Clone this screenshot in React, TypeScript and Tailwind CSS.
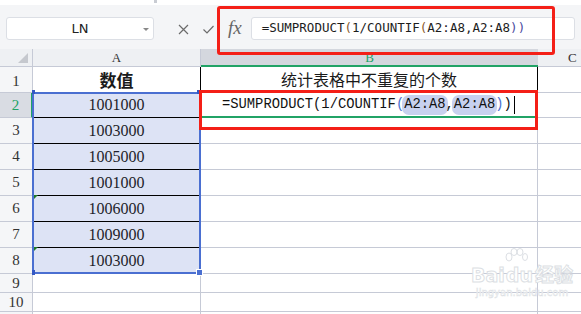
import React from 'react';

const VALUES = ['1001000', '1003000', '1005000', '1001000', '1006000', '1009000', '1003000'];

const GRID = 'border-[#c6cad6]';

// rows 9, 10 and the partial row below
const EMPTY_ROWS = ['9', '10', ''];

const Pill = ({ children }: { children: React.ReactNode }) => (
  <span className="rounded-[7px] bg-[#c8d1ef] px-[2px] -mx-[2px]">{children}</span>
);

const FormulaBar = () => (
  <div className="flex h-[44px] items-start bg-[#f4f5f7] pl-[6px] pt-[12px]">
    {/* 名称框 */}
    <div className="relative flex h-[23px] w-[148px] items-center justify-center rounded-[3px] border border-[#dcdfe5] bg-white font-['DejaVu_Sans'] text-[13px] text-[#222]">
      LN
      <span className="absolute right-[4px] top-[10px] h-0 w-0 border-x-[3px] border-t-[3px] border-x-transparent border-t-[#888]" />
    </div>

    {/* 取消 / 确认 / fx */}
    <svg className="ml-[24px] mt-[7px]" width="11" height="11" viewBox="0 0 11 11">
      <path d="M1 1L10 10M10 1L1 10" stroke="#6b6b6b" strokeWidth="1.2" fill="none" />
    </svg>
    <svg className="ml-[14px] mt-[8px]" width="11" height="9" viewBox="0 0 11 9">
      <path d="M0.5 4.5L4 8L10.5 1" stroke="#6b6b6b" strokeWidth="1.2" fill="none" />
    </svg>
    <div className="ml-[14px] mt-[1px] font-['Liberation_Serif'] text-[19px] italic leading-[20px] text-[#666]">fx</div>

    {/* 编辑栏 */}
    <div className="ml-[9px] mr-[6px] flex h-[23px] flex-1 items-center rounded-[3px] border border-[#dcdfe5] bg-white pl-[10px] font-['DejaVu_Sans_Mono'] text-[12.5px] text-[#1c1c1c]">
      <span>=SUMPRODUCT</span>
      <span className="text-[#8a5a2a]">(</span>
      <span>1/COUNTIF</span>
      <span className="text-[#8a5a2a]">(</span>
      <span>A2:A8,A2:A8</span>
      <span className="text-[#4a4aa0]">))</span>
    </div>
  </div>
);

const App = () => {
  return (
    <div className="relative h-[314px] w-[581px] overflow-hidden bg-white">
      {/* 顶部残留工具栏 */}
      <div className="relative h-[5px] bg-white">
        <div className="absolute left-[154px] top-0 h-[3px] w-[3px] bg-[#c9ccd3]" />
      </div>

      <FormulaBar />

      {/* 表格 */}
      <div className="grid grid-cols-[33px_168px_337px_1fr] grid-rows-[18px_26px_25px_26px_26px_26px_26px_26px_26px_19px_19px_30px] font-['Liberation_Serif'] text-[#1a1a1a]">
        {/* 列标 */}
        <div className={`relative border-b border-r bg-[#eef0f3] ${GRID}`}>
          <svg className="absolute bottom-[3px] right-[4px]" width="10" height="10" viewBox="0 0 10 10">
            <path d="M10 0L10 10L0 10Z" fill="#c5c8ce" />
          </svg>
        </div>
        <div className={`flex items-end justify-center border-b border-r bg-[#eef0f3] pb-[1px] text-[13px] leading-[15px] text-[#333] ${GRID}`}>A</div>
        <div className="flex items-end justify-center border-b-2 border-b-[#21a366] bg-[#d4d7de] text-[13px] leading-[15px] text-[#21a366]">B</div>
        <div className={`flex items-end border-b bg-[#eef0f3] pb-[1px] pl-[30px] text-[13px] leading-[15px] text-[#333] ${GRID}`}>C</div>

        {/* 第 1 行 */}
        <div className={`flex items-center justify-center border-b border-r bg-[#f5f6f8] pt-[3px] text-[15px] text-[#333] ${GRID}`}>1</div>
        <div className={`flex items-center justify-center border-b border-r ${GRID} border-r-black font-['Noto_Sans_CJK_SC',sans-serif] text-[17px] font-bold`}>
          数值
        </div>
        <div className="flex items-center justify-center border-b-2 border-r border-b-[#21a366] border-r-black font-['Noto_Sans_CJK_SC',sans-serif] text-[16px]">
          统计表格中不重复的个数
        </div>
        <div className={`border-b ${GRID}`} />

        {/* 第 2-8 行 */}
        {VALUES.map((v, i) => {
          const row = i + 2;
          const active = row === 2;
          return (
            <React.Fragment key={row}>
              <div
                className={
                  active
                    ? `flex items-center justify-center border-b border-r-2 border-r-[#21a366] bg-[#d9dce3] text-[15px] text-[#21a366] ${GRID}`
                    : `flex items-center justify-center border-b border-r bg-[#f5f6f8] text-[15px] text-[#333] ${GRID}`
                }
              >
                {row}
              </div>
              <div className="relative flex items-center justify-center border-b border-r border-b-black border-r-[#c6cad6] bg-[#dde3f5] text-[16px] text-[#1e1e2a]">
                {(row === 6 || row === 8) && (
                  <svg className="absolute left-0 top-[-1px]" width="5" height="5" viewBox="0 0 5 5">
                    <path d="M0 0L5 0L0 5Z" fill="#1f7a2a" />
                  </svg>
                )}
                {v}
              </div>
              {active ? (
                <div className="flex items-center whitespace-pre border-b-2 border-r border-b-[#21a366] border-r-[#c6cad6] pl-[21px] pt-[1px] font-['Liberation_Mono'] text-[13.8px] text-[#111]">
                  <span>=SUMPRODUCT(1/COUNTIF</span>
                  <span className="text-[#4a6fd1]">(</span>
                  <Pill>A2:A8</Pill>
                  <span>,</span>
                  <Pill>A2:A8</Pill>
                  <span className="text-[#4a6fd1]">)</span>
                  <span>)</span>
                  <span className="ml-[2px] inline-block h-[18px] w-px bg-black" />
                </div>
              ) : (
                <div className={`border-b border-r ${GRID}`} />
              )}
              <div className={`border-b ${GRID}`} />
            </React.Fragment>
          );
        })}

        {/* 第 9-10 行 */}
        {EMPTY_ROWS.map((n, i) => (
          <React.Fragment key={i}>
            <div className={`flex items-center justify-center border-b border-r bg-[#f5f6f8] text-[15px] leading-[15px] text-[#333] ${GRID}`}>{n}</div>
            <div className={`border-b border-r ${GRID}`} />
            <div className={`border-b border-r ${GRID}`} />
            <div className={`border-b ${GRID}`} />
          </React.Fragment>
        ))}
      </div>

      {/* 选区 A2:A8 */}
      <div className="pointer-events-none absolute left-[32px] top-[92px] h-[182px] w-[169px] border-2 border-[#4a6fd1]" />
      <div className="absolute left-[32px] top-[90px] h-[4px] w-[3px] bg-[#3458c4]" />
      <div className="absolute left-[197px] top-[90px] h-[4px] w-[3px] bg-[#3458c4]" />
      <div className="absolute left-[32px] top-[270px] h-[5px] w-[3px] bg-[#3458c4]" />
      <div className="absolute left-[196px] top-[269px] h-[7px] w-[7px] border border-white bg-[#4a6fd1]" />

      {/* 红色标注框 */}
      <div className="pointer-events-none absolute left-[217px] top-[6px] h-[49px] w-[338px] rounded-[3px] border-[3px] border-[#f41f17]" />
      <div className="pointer-events-none absolute left-[199px] top-[90px] h-[40px] w-[339px] border-[3px] border-[#f41f17]" />

      {/* 水印 */}
      <div className="pointer-events-none absolute left-[466px] top-[250px] flex w-[112px] flex-col items-center whitespace-nowrap font-['DejaVu_Sans'] text-white [-webkit-text-stroke:1px_#dcdfe4]">
        <svg className="absolute left-[38px] top-[-2px]" width="24" height="18" viewBox="0 0 24 18">
          <g fill="none" stroke="#dcdfe4" strokeWidth="1">
            <ellipse cx="5" cy="9" rx="3" ry="4" />
            <ellipse cx="10" cy="4" rx="3" ry="3.5" />
            <ellipse cx="16" cy="4" rx="3" ry="3.5" />
            <ellipse cx="21" cy="9" rx="2.5" ry="3.5" />
          </g>
        </svg>
        <div className="mt-[13px] text-[19px] font-bold leading-[22px]">
          Bai<span className="ml-[1px]">du</span>
          <span className="ml-[2px] font-['Noto_Sans_CJK_SC',sans-serif]">经验</span>
        </div>
        <div className="text-[10px] leading-[14px] text-white [-webkit-text-stroke:0.5px_#dcdfe4]">jingyan.baidu.com</div>
      </div>
    </div>
  );
};

export default App;
